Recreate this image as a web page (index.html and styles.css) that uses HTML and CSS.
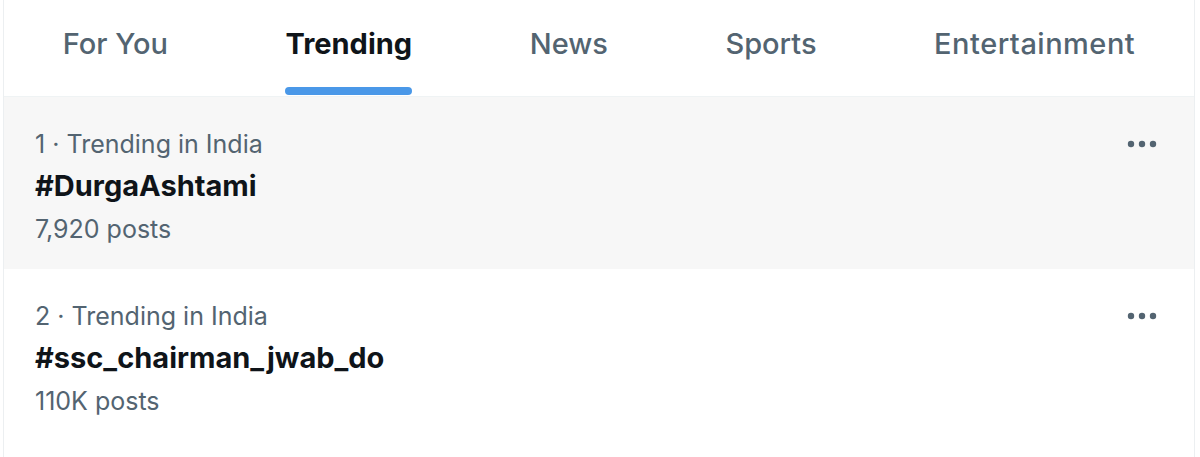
FILE: index.html
```html
<!DOCTYPE html>
<html lang="en">
<head>
<meta charset="utf-8">
<title>Explore</title>
<link rel="stylesheet" href="styles.css">
</head>
<body>
<main class="panel">
  <nav class="tabs">
    <a class="tab"><span class="tab-label">For You</span></a>
    <a class="tab tab-active"><span class="tab-label">Trending<span class="tab-indicator"></span></span></a>
    <a class="tab"><span class="tab-label">News</span></a>
    <a class="tab"><span class="tab-label">Sports</span></a>
    <a class="tab"><span class="tab-label tab-wide">Entertainment</span></a>
  </nav>
  <section class="trends">
    <article class="trend trend-hover">
      <div class="trend-body">
        <div class="trend-meta">1 · Trending in India</div>
        <div class="trend-name">#DurgaAshtami</div>
        <div class="trend-count">7,920 posts</div>
      </div>
      <button class="more" aria-label="More">
        <svg viewBox="0 0 32 8" width="32" height="8"><circle cx="5" cy="4" r="3.2"/><circle cx="16" cy="4" r="3.2"/><circle cx="27" cy="4" r="3.2"/></svg>
      </button>
    </article>
    <article class="trend">
      <div class="trend-body">
        <div class="trend-meta">2 · Trending in India</div>
        <div class="trend-name">#ssc_chairman_jwab_do</div>
        <div class="trend-count">110K posts</div>
      </div>
      <button class="more" aria-label="More">
        <svg viewBox="0 0 32 8" width="32" height="8"><circle cx="5" cy="4" r="3.2"/><circle cx="16" cy="4" r="3.2"/><circle cx="27" cy="4" r="3.2"/></svg>
      </button>
    </article>
  </section>
</main>
</body>
</html>
```

FILE: styles.css
```css
* { box-sizing: border-box; }
html, body { margin: 0; padding: 0; background: #ffffff; }
body {
  font-family: "Inter", "Noto Sans", "Liberation Sans", sans-serif;
  color: #0f1419;
  height: 457px;
  overflow: hidden;
}
.panel {
  margin-left: 3px;
  width: 1192px;
  min-height: 457px;
  border-left: 1px solid #eceff1;
  border-right: 1px solid #eceff1;
}
.tabs {
  display: flex;
  height: 97px;
  border-bottom: 1px solid #eff3f4;
}
.tab {
  flex: 1 1 auto;
  display: flex;
  justify-content: center;
  align-items: center;
  padding: 0 32px;
  font-size: 29px;
  font-weight: 500;
  color: #536471;
}
.tab-label {
  position: relative;
  display: flex;
  align-items: center;
  height: 96px;
  padding-bottom: 9px;
}
.tab-wide { letter-spacing: 0.5px; }
.tab-active { color: #0f1419; font-weight: 700; }
.tab-indicator {
  position: absolute;
  left: 0;
  right: 0;
  bottom: 1px;
  height: 8px;
  border-radius: 8px;
  background: #4a98e8;
}
.trend {
  display: flex;
  justify-content: space-between;
  align-items: flex-start;
  height: 172px;
  padding: 26px 32px 0 31px;
}
.trend-hover { background: #f7f7f7; }
.trend-body { display: flex; flex-direction: column; }
.trend-meta {
  font-size: 25px;
  line-height: 42px;
  color: #536471;
}
.trend-name {
  font-size: 29px;
  line-height: 42px;
  font-weight: 700;
  color: #0f1419;
}
.trend-count {
  font-size: 25px;
  line-height: 44px;
  color: #536471;
}
.more {
  border: 0;
  background: transparent;
  padding: 0;
  margin-top: 17px;
  margin-right: 4px;
  width: 32px;
  height: 8px;
  fill: #536471;
  display: flex;
}
```
